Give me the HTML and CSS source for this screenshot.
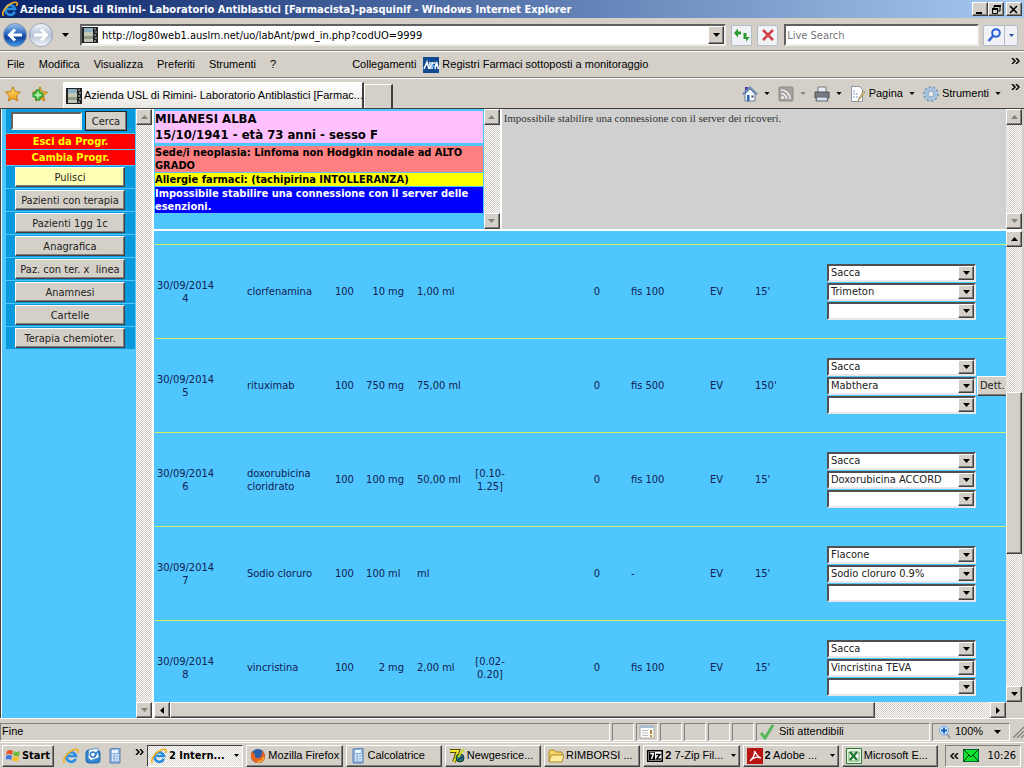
FILE: index.html
```html
<!DOCTYPE html>
<html lang="it">
<head>
<meta charset="utf-8">
<title>Azienda USL di Rimini- Laboratorio Antiblastici</title>
<link rel="stylesheet" href="styles.css">
</head>
<body>
<svg class="defs" aria-hidden="true">
  <defs>
    <linearGradient id="gBlue" x1="0" y1="0" x2="0" y2="1"><stop offset="0" stop-color="#9cc3ee"/><stop offset=".45" stop-color="#2c66c0"/><stop offset=".6" stop-color="#123f9c"/><stop offset="1" stop-color="#3fa0ee"/></linearGradient>
    <linearGradient id="gGrey" x1="0" y1="0" x2="0" y2="1"><stop offset="0" stop-color="#f4f7fb"/><stop offset=".5" stop-color="#b4c0d4"/><stop offset="1" stop-color="#f6f9fd"/></linearGradient>
    <linearGradient id="gGold" x1="0" y1="0" x2="0" y2="1"><stop offset="0" stop-color="#ffe680"/><stop offset="1" stop-color="#f59a0c"/></linearGradient>
    <symbol id="down" viewBox="0 0 7 4"><path d="M0 0h7L3.500 4z" fill="currentColor"/></symbol>
    <symbol id="up" viewBox="0 0 7 4"><path d="M0 4h7L3.500 0z" fill="currentColor"/></symbol>
    <symbol id="left" viewBox="0 0 4 7"><path d="M4 0v7L0 3.500z" fill="currentColor"/></symbol>
    <symbol id="right" viewBox="0 0 4 7"><path d="M0 0v7L4 3.500z" fill="currentColor"/></symbol>
    <symbol id="more" viewBox="0 0 9 6"><path d="M1 0l3 3-3 3M5 0l3 3-3 3" fill="none" stroke="#000" stroke-width="1.500"/></symbol>
    <symbol id="ie" viewBox="0 0 16 16"><path d="M12.800 10.800A4.800 4.800 0 1 1 13 8H5" fill="none" stroke="#2a8ee2" stroke-width="2.600"/><path d="M4 6a5 5 0 0 1 5-3" fill="none" stroke="#9ad8fc" stroke-width="1"/><path d="M1.500 15C-1 12 4 4.500 10 2c5-2 6 0 4.500 3" fill="none" stroke="#f2b021" stroke-width="1.600"/></symbol>
    <symbol id="site" viewBox="0 0 16 16"><path d="M0 0h16v16H0z" fill="#222"/><path d="M2 1h9v4H2z" fill="#8fb0c0"/><path d="M2 5h9v4H2z" fill="#c4c8b4"/><path d="M2 9h9v3H2z" fill="#8d9c84"/><path d="M2 12h9v3H2z" fill="#c6c7bb"/><path d="M12 2h2M13 5h2M12 8h2M13 11h2M12 14h2" stroke="#ccc"/></symbol>
    <symbol id="star" viewBox="0 0 16 16"><path d="M8 .8l2.200 4.800 5.200.6-3.900 3.500 1.100 5.200L8 12.300l-4.600 2.600 1.100-5.200L.6 6.200l5.200-.6z" fill="url(#gGold)" stroke="#bd7a10"/></symbol>
    <symbol id="calc" viewBox="0 0 16 16"><path d="M3 1l10-1v15H3z" fill="#8db6e4" stroke="#5b7fae"/><path d="M5 2h6v3H5z" fill="#e9f4ff"/><path d="M5 7h1.500M8 7h1.500M10.500 7H12M5 9.500h1.500M8 9.500h1.500M10.500 9.500H12M5 12h1.500M8 12h1.500M10.500 12H12" stroke="#fff" stroke-width="1.500"/></symbol>
  </defs>
</svg>

<div class="app">
  <header class="titlebar">
    <svg class="i16"><use href="#ie"/></svg>
    <h1>Azienda USL di Rimini- Laboratorio Antiblastici [Farmacista]-pasquinif - Windows Internet Explorer</h1>
    <div class="winbtns">
      <button class="raised" aria-label="Riduci"><svg width="10" height="9"><path d="M1 7h6v2H1z"/></svg></button>
      <button class="raised" aria-label="Ripristina"><svg width="10" height="9"><path d="M3 1h6v5H7M3 1v2" fill="none" stroke="#000"/><path d="M3 0h7v2H3zM1 3h6v2H1z"/><path d="M1.500 4v4.500h5V4" fill="none" stroke="#000"/></svg></button>
      <button class="raised close" aria-label="Chiudi"><svg width="10" height="9"><path d="M1 1l7 7M8 1L1 8" stroke="#000" stroke-width="1.600"/></svg></button>
    </div>
  </header>

  <div class="navbar">
    <button class="plain" aria-label="Indietro"><svg width="26" height="26"><circle cx="13" cy="13" r="11.500" fill="url(#gBlue)" stroke="#8090b0"/><path d="M20 13H8M13 7.500L7.500 13l5.500 5.500" fill="none" stroke="#fff" stroke-width="3"/></svg></button>
    <button class="plain" aria-label="Avanti"><svg width="26" height="26"><circle cx="13" cy="13" r="11.500" fill="url(#gGrey)" stroke="#98a4b8"/><path d="M6 13h12M13 7.500l5.500 5.500-5.500 5.500" fill="none" stroke="#fff" stroke-width="3"/></svg></button>
    <button class="plain hist" aria-label="Cronologia"><svg class="dn"><use href="#down"/></svg></button>
    <div class="address sunken">
      <svg class="i16"><use href="#site"/></svg>
      <input type="text" aria-label="Indirizzo" value="http://log80web1.auslrn.net/uo/labAnt/pwd_in.php?codUO=9999">
      <button class="raised drop" aria-label="Apri elenco"><svg class="dn"><use href="#down"/></svg></button>
    </div>
    <button class="soft" aria-label="Aggiorna"><svg width="16" height="14"><path d="M0 5l4-4.500V3.500h3v3H4v3zM16 9l-4 4.500V11H9.500V5h3v4z" fill="#2d9b32"/></svg></button>
    <button class="soft" aria-label="Interrompi"><svg width="14" height="14"><path d="M2 2l10 10M12 2L2 12" stroke="#cf4048" stroke-width="2.500"/></svg></button>
    <input class="search sunken" type="text" aria-label="Ricerca" placeholder="Live Search">
    <div class="searchbtn">
      <button class="plain" aria-label="Cerca nel Web"><svg width="15" height="14"><circle cx="9" cy="5" r="3.800" fill="#e8f2ff" stroke="#2b62d8" stroke-width="2"/><path d="M6 8l-4.500 5" stroke="#2b62d8" stroke-width="2.500"/></svg></button>
      <button class="plain opt" aria-label="Opzioni di ricerca"><svg width="5" height="3"><use href="#down"/></svg></button>
    </div>
  </div>

  <nav class="menubar">
    <a href="#">File</a><a href="#">Modifica</a><a href="#">Visualizza</a><a href="#">Preferiti</a><a href="#">Strumenti</a><a href="#" class="help">?</a>
    <span class="links">Collegamenti</span>
    <a href="#" class="fav"><svg width="16" height="16"><path d="M0 0h16v16H0z" fill="#114c92"/><path d="M1 12l3-7 2 7M7 5v7M9 12V6h3M12 12l1.500-7 2 7" fill="none" stroke="#fff" stroke-width="1.500"/><path d="M9 9h3" stroke="#48b0e8" stroke-width="2"/></svg>Registri Farmaci sottoposti a monitoraggio</a>
    <svg class="more"><use href="#more"/></svg>
  </nav>

  <div class="tabbar">
    <button class="plain" aria-label="Preferiti"><svg class="i16"><use href="#star"/></svg></button>
    <button class="plain addfav" aria-label="Aggiungi a Preferiti"><svg class="i16"><use href="#star"/><path d="M4 4h4v3h3v4H8v3H4v-3H1V7h3z" fill="#5fcc50" stroke="#1f8c28"/><path d="M6 6v6M3 9h6" stroke="#e4ffdc"/></svg></button>
    <button class="tab"><svg class="i16"><use href="#site"/></svg><span>Azienda USL di Rimini- Laboratorio Antiblastici [Farmac...</span></button>
    <button class="newtab" aria-label="Nuova scheda"></button>
    <div class="tools">
      <button class="plain" aria-label="Pagina iniziale"><svg width="16" height="16"><path d="M3 1h3v5H3z" fill="#4a32a0"/><path d="M3 8l5-5 5 5v7H3z" fill="#f5f7fc" stroke="#667a9c"/><path d="M.8 8.500L8 1.500l7.200 7" fill="none" stroke="#6f8cb8" stroke-width="2"/><path d="M5 9h2.500v6H5z" fill="#2864b4"/><path d="M9.500 9.500h2v2h-2z" fill="#446"/></svg><svg class="dn"><use href="#down"/></svg></button>
      <button class="plain off" aria-label="Feed"><svg width="16" height="16"><rect x="1" y="1" width="14" height="14" rx="1" fill="#a5a29d" stroke="#8c8984"/><circle cx="4.500" cy="11.500" r="1.500" fill="#eee"/><path d="M3 7.500a5.500 5.500 0 0 1 5.500 5.500M3 4a9 9 0 0 1 9 9" fill="none" stroke="#eee" stroke-width="1.600"/></svg><svg class="dn"><use href="#down"/></svg></button>
      <button class="plain" aria-label="Stampa"><svg width="16" height="16"><path d="M4 1h8v6H4z" fill="#e8eef6" stroke="#777"/><path d="M1 6h14v6H1z" fill="#777c84" stroke="#4c4f55"/><path d="M3 11h10l1 4H2z" fill="#cfe0f5" stroke="#666"/></svg><svg class="dn"><use href="#down"/></svg></button>
      <button class="plain"><svg width="16" height="16"><path d="M1.500.5h8l3 3v12h-11z" fill="#fff" stroke="#8a93a4"/><path d="M3 5h3M3 8h6M3 11h6" stroke="#7a98c8" stroke-dasharray="2 1"/><path d="M15 6l-6 8-1 1 .5-2L13.500 5z" fill="#e9d28a" stroke="#8a7a48" stroke-width=".7"/></svg>Pagina<svg class="dn"><use href="#down"/></svg></button>
      <button class="plain"><svg width="16" height="16"><circle cx="8" cy="8" r="6.800" fill="none" stroke="#7897b5" stroke-width="2" stroke-dasharray="2.500 1.700"/><circle cx="8" cy="8" r="4.700" fill="none" stroke="#a4c4e2" stroke-width="3.400"/><circle cx="8" cy="8" r="2.800" fill="#e9edf0" stroke="#7590ac" stroke-width=".7"/></svg>Strumenti<svg class="dn"><use href="#down"/></svg></button>
    </div>
    <svg class="more"><use href="#more"/></svg>
  </div>

  <div class="frames">
    <aside class="side">
      <form class="find"><input type="text" class="sunken" aria-label="Paziente"><button type="button" class="raised">Cerca</button></form>
      <a href="#" class="red">Esci da Progr.</a>
      <a href="#" class="red">Cambia Progr.</a>
      <div class="cell"><button class="raised yellow">Pulisci</button></div>
      <div class="cell"><button class="raised">Pazienti con terapia</button></div>
      <div class="cell"><button class="raised">Pazienti 1gg 1c</button></div>
      <div class="cell"><button class="raised">Anagrafica</button></div>
      <div class="cell"><button class="raised">Paz. con ter. x&nbsp; linea</button></div>
      <div class="cell"><button class="raised">Anamnesi</button></div>
      <div class="cell"><button class="raised">Cartelle</button></div>
      <div class="cell"><button class="raised">Terapia chemioter.</button></div>
    </aside>
    <div class="vbar off"><span class="raised"><svg class="dn"><use href="#up"/></svg></span><span class="raised"><svg class="dn"><use href="#down"/></svg></span></div>

    <main class="content">
      <div class="top">
        <section class="patient">
          <p class="name">MILANESI ALBA<br>15/10/1941 - età 73 anni - sesso F</p>
          <p class="site">Sede/i neoplasia: Linfoma non Hodgkin nodale ad ALTO GRADO</p>
          <p class="allergy">Allergie farmaci: (tachipirina INTOLLERANZA)</p>
          <p class="exempt">Impossibile stabilire una connessione con il server delle esenzioni.</p>
        </section>
        <div class="vbar off"><span class="raised"><svg class="dn"><use href="#up"/></svg></span><span class="raised"><svg class="dn"><use href="#down"/></svg></span></div>
        <section class="stay">Impossibile stabilire una connessione con il server dei ricoveri.</section>
        <div class="vbar off"><span class="raised"><svg class="dn"><use href="#up"/></svg></span><span class="raised"><svg class="dn"><use href="#down"/></svg></span></div>
      </div>

      <div class="list">
        <div class="view">
          <table class="drugs">
            <colgroup><col class="c-date"><col class="c-drug"><col class="c-pct"><col class="c-num"><col class="c-unit"><col class="c-vol"><col class="c-range"><col class="c-zero"><col class="c-fluid"><col class="c-way"><col class="c-time"><col class="c-pick"><col class="c-more"></colgroup>
            <tbody>
              <tr><td class="mid">30/09/2014<br>4</td><td class="drug">clorfenamina</td><td>100</td><td class="num">10</td><td class="unit">mg</td><td>1,00 ml</td><td></td><td class="zero">0</td><td>fis 100</td><td>EV</td><td>15'</td>
                <td><div class="picks">
                  <label class="pick"><select aria-label="Contenitore"><option>Sacca</option></select><span class="raised"><svg class="dn"><use href="#down"/></svg></span></label>
                  <label class="pick"><select aria-label="Prodotto"><option>Trimeton</option></select><span class="raised"><svg class="dn"><use href="#down"/></svg></span></label>
                  <label class="pick"><select aria-label="Altro prodotto"><option></option></select><span class="raised"><svg class="dn"><use href="#down"/></svg></span></label>
                </div></td><td></td></tr>
              <tr><td class="mid">30/09/2014<br>5</td><td class="drug">rituximab</td><td>100</td><td class="num">750</td><td class="unit">mg</td><td>75,00 ml</td><td></td><td class="zero">0</td><td>fis 500</td><td>EV</td><td>150'</td>
                <td><div class="picks">
                  <label class="pick"><select aria-label="Contenitore"><option>Sacca</option></select><span class="raised"><svg class="dn"><use href="#down"/></svg></span></label>
                  <label class="pick"><select aria-label="Prodotto"><option>Mabthera</option></select><span class="raised"><svg class="dn"><use href="#down"/></svg></span></label>
                  <label class="pick"><select aria-label="Altro prodotto"><option></option></select><span class="raised"><svg class="dn"><use href="#down"/></svg></span></label>
                </div></td><td><button class="raised dett">Dett.</button></td></tr>
              <tr><td class="mid">30/09/2014<br>6</td><td class="drug">doxorubicina cloridrato</td><td>100</td><td class="num">100</td><td class="unit">mg</td><td>50,00 ml</td><td class="mid">[0.10-<br>1.25]</td><td class="zero">0</td><td>fis 100</td><td>EV</td><td>15'</td>
                <td><div class="picks">
                  <label class="pick"><select aria-label="Contenitore"><option>Sacca</option></select><span class="raised"><svg class="dn"><use href="#down"/></svg></span></label>
                  <label class="pick"><select aria-label="Prodotto"><option>Doxorubicina ACCORD</option></select><span class="raised"><svg class="dn"><use href="#down"/></svg></span></label>
                  <label class="pick"><select aria-label="Altro prodotto"><option></option></select><span class="raised"><svg class="dn"><use href="#down"/></svg></span></label>
                </div></td><td></td></tr>
              <tr><td class="mid">30/09/2014<br>7</td><td class="drug">Sodio cloruro</td><td>100</td><td class="num">100</td><td class="unit">ml</td><td>ml</td><td></td><td class="zero">0</td><td>-</td><td>EV</td><td>15'</td>
                <td><div class="picks">
                  <label class="pick"><select aria-label="Contenitore"><option>Flacone</option></select><span class="raised"><svg class="dn"><use href="#down"/></svg></span></label>
                  <label class="pick"><select aria-label="Prodotto"><option>Sodio cloruro 0.9%</option></select><span class="raised"><svg class="dn"><use href="#down"/></svg></span></label>
                  <label class="pick"><select aria-label="Altro prodotto"><option></option></select><span class="raised"><svg class="dn"><use href="#down"/></svg></span></label>
                </div></td><td></td></tr>
              <tr><td class="mid">30/09/2014<br>8</td><td class="drug">vincristina</td><td>100</td><td class="num">2</td><td class="unit">mg</td><td>2,00 ml</td><td class="mid">[0.02-<br>0.20]</td><td class="zero">0</td><td>fis 100</td><td>EV</td><td>15'</td>
                <td><div class="picks">
                  <label class="pick"><select aria-label="Contenitore"><option>Sacca</option></select><span class="raised"><svg class="dn"><use href="#down"/></svg></span></label>
                  <label class="pick"><select aria-label="Prodotto"><option>Vincristina TEVA</option></select><span class="raised"><svg class="dn"><use href="#down"/></svg></span></label>
                  <label class="pick"><select aria-label="Altro prodotto"><option></option></select><span class="raised"><svg class="dn"><use href="#down"/></svg></span></label>
                </div></td><td></td></tr>
            </tbody>
          </table>
        </div>
        <div class="vbar"><span class="raised"><svg class="dn"><use href="#up"/></svg></span><span class="track"><span class="raised thumb"></span></span><span class="raised"><svg class="dn"><use href="#down"/></svg></span></div>
        <div class="hbar"><span class="raised"><svg width="4" height="7"><use href="#left"/></svg></span><span class="track"><span class="raised thumb"></span></span><span class="raised"><svg width="4" height="7"><use href="#right"/></svg></span></div>
        <div class="corner"></div>
      </div>
    </main>
  </div>

  <footer class="status">
    <span class="panel grow">Fine</span>
    <span class="panel box"></span>
    <span class="panel box"><svg width="16" height="14"><path d="M1 1h14v12H1z" fill="#fff" stroke="#aaa9a2"/><path d="M1 1h14v2H1z" fill="#a7bedc"/><path d="M3 5.500h6M3 8h6M3 10.500h6" stroke="#bbb"/><path d="M12 5v4M12 10v2" stroke="#b98a30" stroke-width="2"/></svg></span>
    <span class="panel box"></span><span class="panel box"></span><span class="panel box"></span><span class="panel box"></span>
    <span class="panel zone"><svg width="16" height="16"><path d="M2 9l4 5 8-13" fill="none" stroke="#55b95b" stroke-width="3"/></svg>Siti attendibili</span>
    <span class="panel zoom"><svg width="13" height="14"><path d="M8 8l4 5" stroke="#999" stroke-width="2"/><circle cx="6" cy="5.500" r="4.500" fill="#d9edff" stroke="#6aa2dc"/><path d="M6 2.500v6M3 5.500h6" stroke="#1464b8" stroke-width="2"/></svg>100%<svg class="dn"><use href="#down"/></svg></span>
    <svg class="grip" width="12" height="12"><path d="M1 12L12 1M5 12l7-7M9 12l3-3" stroke="#8a8780" stroke-width="1.500"/></svg>
  </footer>

  <footer class="taskbar">
    <button class="raised start"><svg width="15" height="15"><path d="M1 3q3-2 6 0L6 7Q3 5 0 7z" fill="#e5542c"/><path d="M8 3q3 2 6 0l-1 5q-3 1-6-1z" fill="#6db83a"/><path d="M0 8q3-2 6 0l-1 4q-3-2-5 0z" fill="#3f75dc"/><path d="M7 8q3 2 6 0l-1 5q-3 1-6-1z" fill="#f6bf28"/></svg>Start</button>
    <div class="quick">
      <button class="plain" aria-label="Internet Explorer"><svg class="i16"><use href="#ie"/></svg></button>
      <button class="plain" aria-label="Posta"><svg width="16" height="16"><rect x="1" y="2" width="14" height="13" rx="3" fill="#2c86d4" stroke="#1b66aa"/><path d="M4 1.500l9-1 1 9-8 3-3-3z" fill="#fff" stroke="#5596cc"/><circle cx="8" cy="6.500" r="2.600" fill="none" stroke="#2c7cc4" stroke-width="1.500"/><path d="M10 8l3-5" stroke="#2c7cc4" stroke-width="1.500"/></svg></button>
      <button class="plain" aria-label="Calcolatrice"><svg class="i16"><use href="#calc"/></svg></button>
    </div>
    <svg class="more"><use href="#more"/></svg>
    <div class="tasks">
      <button class="task active"><svg class="i16"><use href="#ie"/></svg><span><b>2 Intern...</b></span><svg class="dn"><use href="#down"/></svg></button>
      <button class="task raised"><svg width="16" height="16"><circle cx="8" cy="8" r="7" fill="#2b5da8"/><path d="M1 5q-1 9 7 10 7 0 7-7-1-4-3-6 1 7-4 8-4 0-3-4L3 5 2 3z" fill="#e8641c"/><path d="M14 9q-2 5-7 5" fill="none" stroke="#f9b434" stroke-width="1.500"/></svg><span>Mozilla Firefox</span></button>
      <button class="task raised"><svg class="i16"><use href="#calc"/></svg><span>Calcolatrice</span></button>
      <button class="task raised"><svg width="16" height="16"><path d="M1 3h8L5 14" fill="none" stroke="#555000" stroke-width="4"/><path d="M1 3h8L5 14" fill="none" stroke="#eee628" stroke-width="2"/><circle cx="11" cy="10" r="4" fill="#228a48" stroke="#134"/><path d="M9 9l6-8" stroke="#cfd820" stroke-width="2"/><path d="M9 12l5-3" stroke="#283ca8" stroke-width="2"/></svg><span>Newgesrice...</span></button>
      <button class="task raised"><svg width="16" height="16"><path d="M1 13V3l1-1h4l2 2h6v9z" fill="#f6d66a" stroke="#b08a24"/><path d="M1 14l2-7h13l-2 7z" fill="#ffec9c" stroke="#b08a24"/></svg><span>RIMBORSI ...</span></button>
      <button class="task raised"><svg width="16" height="16"><path d="M0 2h16v12H0z"/><path d="M1.500 3.500h13v9h-13z" fill="#fff"/><path d="M2 4h6v8H2z"/><path d="M3 5.500h3.500L4.500 11" fill="none" stroke="#fff" stroke-width="1.500"/><path d="M9 6.500h4L9.500 11H14" fill="none" stroke="#000" stroke-width="1.500"/></svg><span><b>2</b> 7-Zip Fil...</span><svg class="dn"><use href="#down"/></svg></button>
      <button class="task raised"><svg width="16" height="16"><path d="M0 0h16v16H0z" fill="#b81414"/><path d="M3 13C6 10 8 6 7.500 3c3 5 4 7 6.500 7C10 8 6 10 3 13z" fill="none" stroke="#fff" stroke-width="1.300"/></svg><span><b>2</b> Adobe ...</span><svg class="dn"><use href="#down"/></svg></button>
      <button class="task raised"><svg width="16" height="16"><path d="M.5.5h15v15H.5z" fill="#e6f2e2" stroke="#2c7a34"/><path d="M3 4h10v9H3z" fill="#fff" stroke="#6aaa68"/><path d="M4 4l7 8M11 4l-7 8" stroke="#227830" stroke-width="2.400"/></svg><span>Microsoft E...</span></button>
    </div>
    <div class="tray"><svg class="more flip"><use href="#more"/></svg><svg width="16" height="13"><path d="M.5.5h15v12H.5z" fill="#12e22c" stroke="#064"/><path d="M0 0l8 8 8-8M0 13l6-7M16 13l-6-7" fill="none" stroke="#043c0c"/></svg><time>10:26</time></div>
  </footer>
</div>
</body>
</html>
```
FILE: styles.css
```css
* { box-sizing: border-box; }
body { margin: 0; background: #d4d0c8; color: #000; font: 11px/13px "DejaVu Sans Condensed", "DejaVu Sans", sans-serif; }
button, input, select { font: inherit; color: inherit; margin: 0; border-radius: 0; }
button { padding: 0; cursor: pointer; }
a { color: inherit; text-decoration: none; }
p, h1 { margin: 0; }
svg { flex: none; display: block; }
.defs { position: absolute; width: 0; height: 0; }
.i16 { width: 16px; height: 16px; }
.dn { width: 7px; height: 4px; }
.more { width: 9px; height: 6px; }
.flip { transform: scaleX(-1); }
.raised { background: #d4d0c8; border: 1px solid; border-color: #fff #404040 #404040 #fff; box-shadow: inset -1px -1px #808080; }
.sunken { background: #fff; border: 2px solid; border-color: #606060 #f0eee8 #f0eee8 #606060; }
.plain { background: none; border: 0; display: flex; align-items: center; }
.app { height: 100vh; display: flex; flex-direction: column; overflow: hidden; }

.titlebar { height: 18px; flex: none; display: flex; align-items: center; gap: 2px; padding: 0 2px; background: linear-gradient(90deg, #0a246a, #a6caf0); color: #fff; }
.titlebar h1 { flex: 1; font: inherit; font-weight: bold; white-space: nowrap; overflow: hidden; }
.winbtns { display: flex; }
.winbtns button { width: 16px; height: 14px; display: flex; align-items: center; justify-content: center; }
.winbtns .close { margin-left: 2px; }

.navbar { height: 33px; flex: none; display: flex; align-items: center; padding: 2px 6px 0 2px; border-bottom: 1px solid #808080; }
.navbar .hist { padding: 0 11px 0 8px; }
.address { flex: 660; height: 22px; display: flex; align-items: center; gap: 2px; }
.address input { flex: 1; min-width: 0; border: 0; padding: 0 2px; background: none; }
.drop { width: 16px; height: 18px; display: flex; align-items: center; justify-content: center; }
.soft { width: 21px; height: 21px; margin-left: 5px; background: #f1f2f5; border: 1px solid #b4bccb; border-radius: 2px; display: flex; align-items: center; justify-content: center; }
.search { flex: 194; min-width: 0; height: 22px; margin-left: 6px; padding: 0 1px; }
.search::placeholder { color: #777; opacity: 1; }
.searchbtn { display: flex; height: 21px; margin-left: 4px; background: #f1f2f5; border: 1px solid #b4bccb; border-radius: 2px; }
.searchbtn button { width: 20px; justify-content: center; }
.searchbtn .opt { width: 13px; border-left: 1px solid #b4bccb; color: #2450a0; }

.menubar, .tabbar, .status, .tasks { font-family: "Liberation Sans", sans-serif; }
.menubar { height: 27px; flex: none; display: flex; align-items: center; padding: 0 4px 0 7px; border-top: 1px solid #fff; border-bottom: 1px solid #808080; white-space: nowrap; }
.menubar a { margin-right: 14px; }
.menubar .help { margin-right: 76px; }
.links { margin-right: 7px; }
.menubar .fav { display: flex; align-items: center; gap: 3px; }
.menubar .more { margin: 0 0 8px auto; }

.tabbar { height: 30px; flex: none; display: flex; align-items: center; padding: 0 4px 0 5px; border-top: 1px solid #fff; white-space: nowrap; }
.addfav { margin: 0 15px 0 11px; }
.tab { flex: 0 1 301px; min-width: 0; height: 26px; align-self: flex-end; display: flex; align-items: center; gap: 2px; padding: 0 0 0 2px; background: linear-gradient(#fff, #e8e6e1); border: 1px solid #fff; border-right: 2px solid #404040; border-bottom: 0; }
.tab span { overflow: hidden; }
.newtab { width: 29px; height: 24px; align-self: flex-end; background: #d4d0c8; border: 1px solid #fff; border-right: 2px solid #404040; border-bottom: 0; }
.tools { margin-left: auto; display: flex; gap: 8px; margin-right: 10px; }
.tools button { gap: 3px; }
.tools .dn { margin-left: 3px; width: 6px; height: 3px; }
.off .dn { color: #86827a; }
.tabbar .more { margin-bottom: 14px; }

.frames { flex: 1; min-height: 0; display: flex; border: 1px solid #404040; border-width: 1px 0 0 1px; padding: 0 2px 0 1px; background: #fff; box-shadow: inset -2px 0 #d4d0c8; }
.side { flex: none; width: 134px; background: #50c6ff; display: flex; flex-direction: column; gap: 1px; padding: 0 1px 0 4px; color: #222; }
.find { display: flex; align-items: center; gap: 3px; height: 24px; padding: 0 8px 0 5px; background: #0999dd; }
.find input { flex: 1; min-width: 0; height: 18px; }
.find button { width: 42px; height: 20px; outline: 1px solid #222; outline-offset: -1px; }
.red { height: 15px; line-height: 16px; background: #f00; color: #ff0; font-weight: bold; text-align: center; }
.cell { height: 22px; padding: 1px 10px 1px 9px; background: #0999dd; }
.cell button { display: block; width: 100%; height: 20px; white-space: nowrap; }
.cell .yellow { background: #ffffb4; }
.vbar { width: 16px; flex: none; display: flex; flex-direction: column; justify-content: space-between; }
.vbar, .hbar { background: repeating-conic-gradient(#fff 0 25%, #d0ccc4 0 50%) 0 0 / 2px 2px; }
.vbar > .raised, .hbar > .raised { flex: none; width: 16px; height: 16px; display: flex; align-items: center; justify-content: center; }
.track { flex: 1; display: flex; }
.vbar .track { flex-direction: column; }
.vbar .thumb { width: 16px; height: 37%; margin-top: 145px; }
.hbar { display: flex; }
.hbar .thumb { width: 86%; }

.content { flex: 1; min-width: 0; margin-left: 2px; display: flex; flex-direction: column; gap: 2px; }
.top { display: flex; height: 120px; flex: none; }
.patient { flex: 330; background: #50c6ff; padding: 2px 1px 0; font-weight: bold; }
.patient p { line-height: 13px; }
.patient .name { background: #ffc0ff; font-size: 13px; line-height: 16px; margin-bottom: 3px; }
.patient .site { background: #ff8080; margin-bottom: 1px; }
.patient .allergy { background: #ff0; margin-bottom: 1px; }
.patient .exempt { background: #00f; color: #fff; }
.stay { flex: 504; margin-left: 2px; padding: 3px 2px; background: #d0d0d0; color: #333; font: 11px/13px "Liberation Serif", serif; }
.list { flex: 1; min-height: 0; display: grid; grid-template: minmax(0, 1fr) 16px / minmax(0, 1fr) 16px; }
.corner { background: #d4d0c8; }
.view { background: #50c6ff; overflow: hidden; padding: 13px 0 0 1px; }
.drugs { table-layout: fixed; width: 882px; border-collapse: collapse; color: #102050; }
.drugs tr { height: 94px; border-top: 1px solid #d8f060; }
.drugs td { padding: 0; vertical-align: middle; white-space: nowrap; }
.c-date { width: 61px; } .c-drug { width: 119px; } .c-pct { width: 28px; } .c-num { width: 22px; }
.c-unit { width: 32px; } .c-vol { width: 50px; } .c-range { width: 46px; } .c-zero { width: 118px; }
.c-fluid { width: 79px; } .c-way { width: 45px; } .c-time { width: 72px; } .c-pick { width: 150px; } .c-more { width: 60px; }
.drugs .mid { text-align: center; }
.drugs .drug { padding: 0 12px 0 31px; white-space: normal; }
.drugs .num { text-align: right; }
.drugs .unit { padding-left: 3px; }
.drugs .zero { text-align: center; padding-left: 50px; }
.picks { display: grid; gap: 1px; padding-right: 1px; }
.pick { display: grid; grid-template-columns: 1fr 16px; height: 18px; background: #fff; border: 2px solid; border-color: #505050 #e8e8e8 #e8e8e8 #505050; }
.pick select { appearance: none; grid-area: 1 / 1 / 2 / 3; border: 0; background: none; padding: 0 2px; width: 100%; height: 14px; line-height: 14px; color: #222; }
.pick span { grid-area: 1 / 2; pointer-events: none; color: #000; display: flex; align-items: center; justify-content: center; }
.dett { width: 40px; height: 20px; padding-left: 2px; text-align: left; color: #222; }

.status { height: 24px; flex: none; display: flex; align-items: center; gap: 2px; padding-top: 2px; border-top: 1px solid #fff; }
.panel { height: 18px; display: flex; align-items: center; gap: 4px; border: 1px solid; border-color: #808080 #fff #fff #808080; white-space: nowrap; }
.grow { flex: 1; padding-left: 1px; }
.box { width: 22px; justify-content: center; }
.zone { width: 174px; padding-left: 2px; }
.zoom { width: 78px; padding-left: 5px; }
.zoom .dn { margin-left: auto; margin-right: 8px; }

.taskbar { height: 26px; flex: none; display: flex; align-items: center; padding: 0 3px 0 2px; border-top: 1px solid #fff; }
.start { width: 52px; height: 22px; font-weight: bold; display: flex; align-items: center; justify-content: center; gap: 1px; }
.quick { display: flex; gap: 6px; margin: 0 12px 0 9px; }
.taskbar > .more { margin: 0 3px 8px 0; }
.tasks { flex: 1; min-width: 0; display: flex; gap: 3px; }
.task { flex: 1; min-width: 0; height: 22px; display: flex; align-items: center; gap: 2px; padding: 0 1px 0 3px; }
.task span { flex: 1; text-align: left; white-space: nowrap; overflow: hidden; }
.task .dn { width: 5px; height: 3px; margin-right: 2px; }
.active { font-family: "DejaVu Sans Condensed", sans-serif; border: 1px solid; border-color: #404040 #fff #fff #404040; background: repeating-conic-gradient(#fff 0 25%, #d8d5ce 0 50%) 0 0 / 2px 2px; }
.tray { width: 76px; height: 22px; margin-left: 7px; display: flex; align-items: center; gap: 4px; padding: 0 4px; border: 1px solid; border-color: #808080 #fff #fff #808080; }
.tray time { margin-left: auto; }
```
